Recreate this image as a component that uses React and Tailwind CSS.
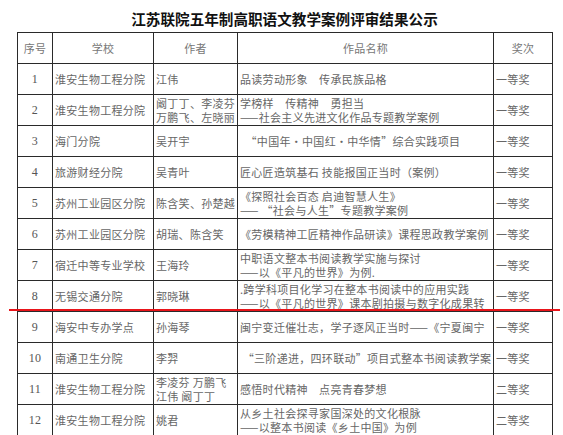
const rows = [
  { no: '1', school: '淮安生物工程分院', author: ['江伟'], title: ['品读劳动形象　传承民族品格'], award: '一等奖' },
  { no: '2', school: '淮安生物工程分院', author: ['阚丁丁、李凌芬', '万鹏飞、左晓丽'], title: ['学榜样　传精神　勇担当', '——社会主义先进文化作品专题教学案例'], award: '一等奖' },
  { no: '3', school: '海门分院', author: ['吴开宇'], title: ['  “中国年·中国红·中华情”综合实践项目'], award: '一等奖' },
  { no: '4', school: '旅游财经分院', author: ['吴青叶'], title: ['匠心匠造筑基石 技能报国正当时（案例）'], award: '一等奖' },
  { no: '5', school: '苏州工业园区分院', author: ['陈含笑、孙楚越'], title: ['《探照社会百态 启迪智慧人生》', '—— “社会与人生”专题教学案例'], award: '一等奖' },
  { no: '6', school: '苏州工业园区分院', author: ['胡瑞、陈含笑'], title: ['《劳模精神工匠精神作品研读》课程思政教学案例'], award: '一等奖' },
  { no: '7', school: '宿迁中等专业学校', author: ['王海玲'], title: ['中职语文整本书阅读教学实施与探讨', '——以《平凡的世界》为例.'], award: '一等奖' },
  // long titles are cut off at the column edge in the original notice
  { no: '8', school: '无锡交通分院', author: ['郭晓琳'], title: ['.跨学科项目化学习在整本书阅读中的应用实践', '——以《平凡的世界》课本剧拍摄与数字化成果转'], award: '一等奖' },
  { no: '9', school: '海安中专办学点', author: ['孙海琴'], title: ['闽宁变迁催壮志，学子逐风正当时——《宁夏闽宁'], award: '一等奖' },
  { no: '10', school: '南通卫生分院', author: ['李羿'], title: [' “三阶递进，四环联动”项目式整本书阅读教学案'], award: '一等奖' },
  { no: '11', school: '淮安生物工程分院', author: ['李凌芬 万鹏飞', '江伟 阚丁丁'], title: ['感悟时代精神　点亮青春梦想'], award: '二等奖' },
  { no: '12', school: '淮安生物工程分院', author: ['姚君'], title: ['从乡土社会探寻家国深处的文化根脉', '——以整本书阅读《乡土中国》为例'], award: '二等奖' },
];

const cjk = { fontFamily: '"Noto Sans CJK SC", sans-serif' };
const serif = { fontFamily: '"Liberation Serif", "Noto Sans CJK SC", serif' };

function Lines({ items, w }) {
  return (
    <div className={`leading-[14px] overflow-hidden ${w}`}>
      {items.map((t, i) => (
        <div key={i} className="whitespace-pre overflow-hidden">{t}</div>
      ))}
    </div>
  );
}

export default function App() {
  return (
    <div className="relative w-[563px] h-[435px] overflow-hidden bg-white">
      <div className="pt-[9px] h-[32px] pl-[17px] w-[552px] text-center">
        <h1 className="text-[14.6px] leading-[20px] font-bold text-[#111]" style={cjk}>
          江苏联院五年制高职语文教学案例评审结果公示
        </h1>
      </div>

      <table className="ml-[17px] w-[535px] table-fixed border-collapse text-[11px] text-[#666] tracking-[0.3px]" style={cjk}>
        <colgroup>
          <col className="w-[35px]" />
          <col className="w-[101px]" />
          <col className="w-[84px]" />
          <col className="w-[256px]" />
          <col className="w-[59px]" />
        </colgroup>
        <thead>
          <tr className="h-[31px] text-[#777]">
            <th className="border border-[#2a2a2a] font-normal">序号</th>
            <th className="border border-[#2a2a2a] font-normal">学校</th>
            <th className="border border-[#2a2a2a] font-normal">作者</th>
            <th className="border border-[#2a2a2a] font-normal">作品名称</th>
            <th className="border border-[#2a2a2a] font-normal">奖次</th>
          </tr>
        </thead>
        <tbody>
          {rows.map(r => (
            <tr key={r.no} className="h-[31px]">
              <td className="border border-[#2a2a2a] text-center text-[12px] text-[#555]" style={serif}>{r.no}</td>
              <td className="border border-[#2a2a2a] pl-[2px]">
                <div className="w-[97px] whitespace-nowrap overflow-hidden">{r.school}</div>
              </td>
              <td className="border border-[#2a2a2a] pl-[2px]"><Lines items={r.author} w="w-[80px]" /></td>
              <td className="border border-[#2a2a2a] pl-[2px]"><Lines items={r.title} w="w-[252px]" /></td>
              <td className="border border-[#2a2a2a] pl-[2px] whitespace-nowrap">{r.award}</td>
            </tr>
          ))}
        </tbody>
      </table>

      <div className="absolute left-[9px] top-[309px] w-[551px] h-[2px] bg-[#e8141a]" />
    </div>
  );
}
